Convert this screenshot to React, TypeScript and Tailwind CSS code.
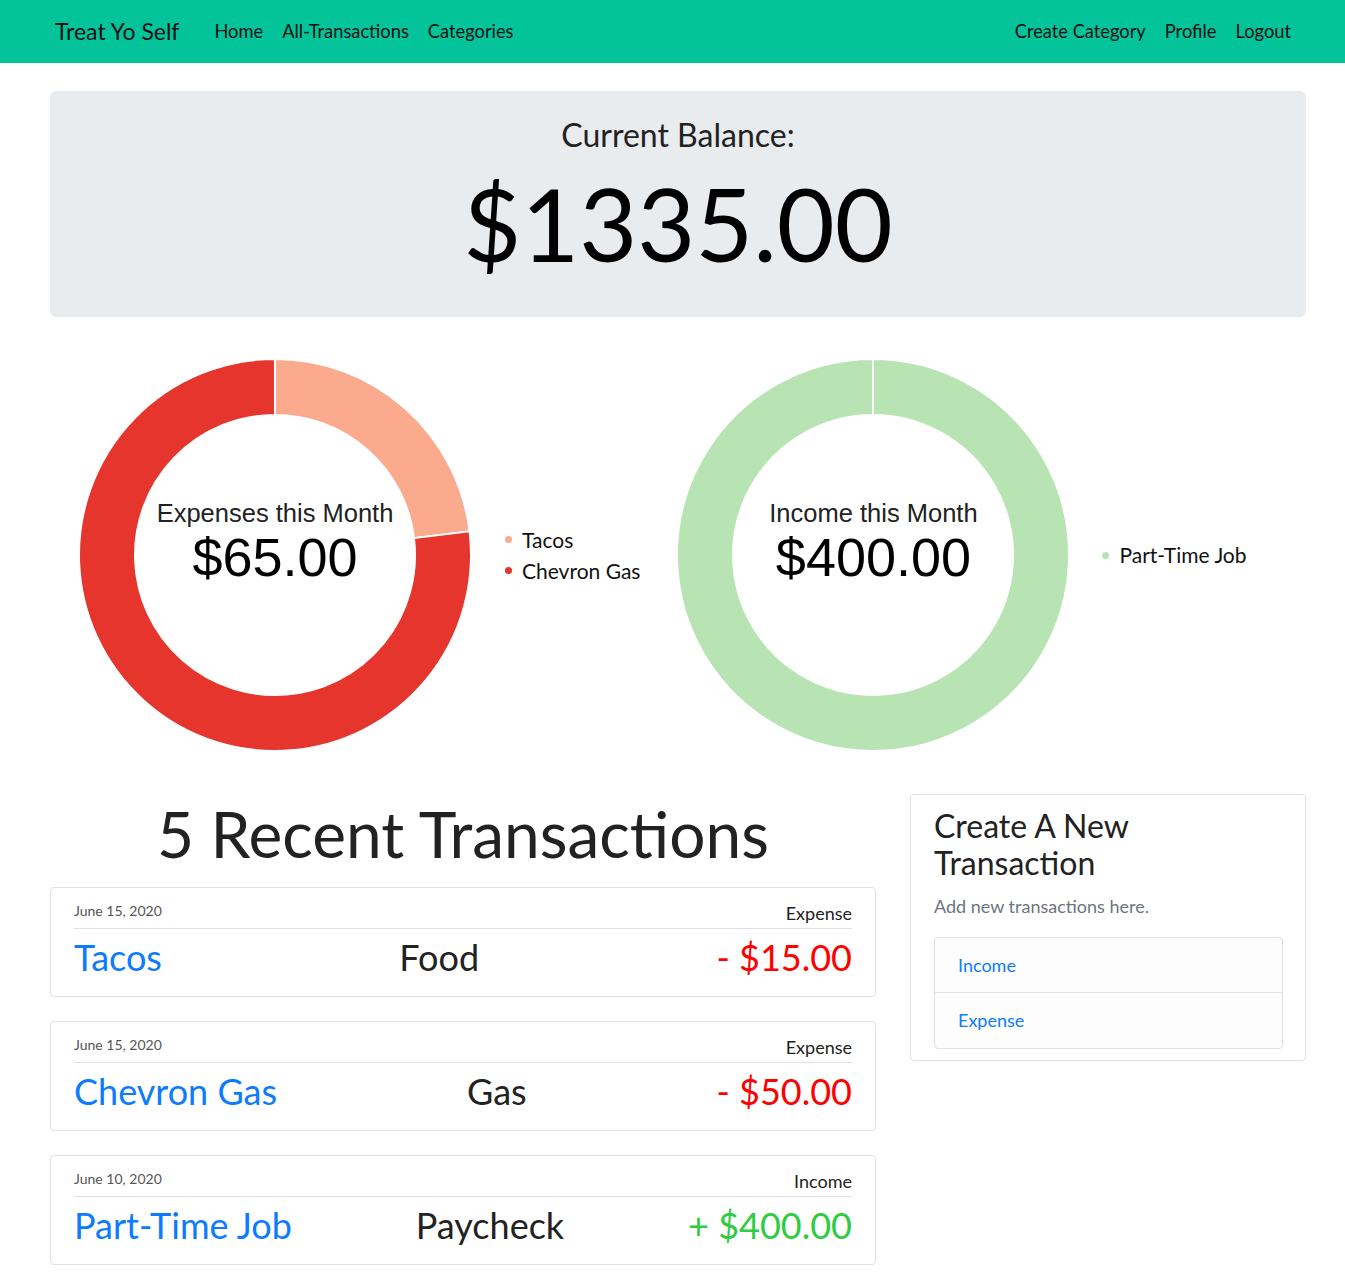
import React from 'react';

const lato = { fontFamily: 'Lato, "Noto Sans", sans-serif' };

interface Slice {
  label: string;
  value: number;
  color: string;
}

const R = 197;
const r = 140;

function arcPath(a0: number, a1: number) {
  const rad = (a: number) => ((a - 90) * Math.PI) / 180;
  const p = (rr: number, a: number) => `${R + rr * Math.cos(rad(a))} ${R + rr * Math.sin(rad(a))}`;
  const large = a1 - a0 > 180 ? 1 : 0;
  return `M ${p(R - 1, a0)} A ${R - 1} ${R - 1} 0 ${large} 1 ${p(R - 1, a1)} L ${p(r, a1)} A ${r} ${r} 0 ${large} 0 ${p(r, a0)} Z`;
}

const Donut: React.FC<{ slices: Slice[]; title: string; amount: string }> = ({ slices, title, amount }) => {
  const total = slices.reduce((s, x) => s + x.value, 0);
  let start = 0;
  return (
    <div className="relative h-[394px] w-[394px] shrink-0">
      <svg width="394" height="394" viewBox="0 0 394 394">
        {slices.map((s) => {
          const end = start + (s.value / total) * 360;
          const d = arcPath(start, Math.min(end, 359.99));
          start = end;
          return <path key={s.label} d={d} fill={s.color} stroke="#fff" strokeWidth="2" />;
        })}
      </svg>
      <div
        className="absolute inset-0 flex flex-col items-center justify-center pb-[25px] text-black"
        style={{ fontFamily: '"Liberation Sans", Arial, sans-serif' }}
      >
        <div className="text-[25.5px] leading-none text-[#222]">{title}</div>
        <div className="mt-[4px] text-[54px] leading-none">{amount}</div>
      </div>
    </div>
  );
};

const Legend: React.FC<{ slices: Slice[] }> = ({ slices }) => (
  <div className="flex flex-col gap-[7px]">
    {slices.map((s) => (
      <div key={s.label} className="flex items-center text-[21px] leading-[24px] text-[#111]">
        <span className="mr-[10px] inline-block h-[7px] w-[7px] rounded-full" style={{ backgroundColor: s.color }} />
        {s.label}
      </div>
    ))}
  </div>
);

const transactions = [
  { date: 'June 15, 2020', type: 'Expense', name: 'Tacos', category: 'Food', amount: '- $15.00', income: false },
  { date: 'June 15, 2020', type: 'Expense', name: 'Chevron Gas', category: 'Gas', amount: '- $50.00', income: false },
  { date: 'June 10, 2020', type: 'Income', name: 'Part-Time Job', category: 'Paycheck', amount: '+ $400.00', income: true },
];

const expenses: Slice[] = [
  { label: 'Tacos', value: 15, color: '#fbaa8d' },
  { label: 'Chevron Gas', value: 50, color: '#e5352c' },
];
const income: Slice[] = [{ label: 'Part-Time Job', value: 400, color: '#b8e3b3' }];

export default function App() {
  return (
    <div className="min-h-[1279px] bg-white text-[#222]" style={lato}>
      <nav className="flex h-[63px] items-center bg-[#03c39b] pl-[55px] pr-[54px] text-[#111]">
        <span className="mr-[35px] text-[23px]">Treat Yo Self</span>
        <div className="flex gap-[19px] text-[18.3px]">
          <span>Home</span>
          <span>All-Transactions</span>
          <span>Categories</span>
        </div>
        <div className="ml-auto flex gap-[19px] text-[18.3px]">
          <span>Create Category</span>
          <span>Profile</span>
          <span>Logout</span>
        </div>
      </nav>

      <div className="ml-[50px] w-[1256px]">
        <div className="mt-[28px] flex h-[226px] flex-col items-center rounded-[6px] bg-[#e9ecef] pt-[14px]">
          <h1 className="text-[32px] leading-[60px] text-[#222]">Current Balance:</h1>
          <div className="mt-[-2px] text-[100px] leading-[120px] text-black">$1335.00</div>
        </div>

        <div className="mt-[41px] flex items-center">
          <div className="ml-[28px] flex items-center">
            <Donut slices={expenses} title="Expenses this Month" amount="$65.00" />
            <div className="ml-[33px]">
              <Legend slices={expenses} />
            </div>
          </div>
          <div className="ml-[36px] flex items-center">
            <Donut slices={income} title="Income this Month" amount="$400.00" />
            <div className="ml-[32px]">
              <Legend slices={income} />
            </div>
          </div>
        </div>

        <div className="mt-[42px] flex items-start gap-[34px]">
          <div className="w-[826px]">
            <h2 className="mb-[14px] text-center text-[64px] leading-[79px] text-[#222]">5 Recent Transactions</h2>
            <div className="flex flex-col gap-[24px]">
              {transactions.map((t) => (
                <div key={t.name} className="h-[110px] rounded-[4px] border border-[#dfe2e5] px-[23px] pt-[13px]">
                  <div className="flex items-end justify-between border-b border-[#dee2e6] pb-[4px]">
                    <span className="mb-[3px] text-[14px] leading-[20px] text-[#555]">{t.date}</span>
                    <span className="text-[18px] leading-[22px] text-[#222]">{t.type}</span>
                  </div>
                  <div className="flex items-center justify-between pt-[4px] text-[36px] leading-[48px]">
                    <span className="text-[#0d7bff]">{t.name}</span>
                    <span className="text-[#222]">{t.category}</span>
                    <span className={t.income ? 'text-[#2ecc40]' : 'text-[#ff0000]'}>{t.amount}</span>
                  </div>
                </div>
              ))}
            </div>
          </div>

          <div className="w-[396px] rounded-[4px] border border-[#dfe2e5] pb-[11px] pl-[23px] pr-[22px] pt-[12px]">
            <h3 className="text-[32px] leading-[37px] text-[#222]">Create A New Transaction</h3>
            <p className="mt-[13px] text-[18px] leading-[24px] text-[#6c757d]">Add new transactions here.</p>
            <div className="mt-[19px] rounded-[4px] border border-[#dee2e6] bg-[#fdfdfd]">
              <div className="flex h-[55px] items-center border-b border-[#dee2e6] px-[23px] text-[18px] text-[#0d7bff]">Income</div>
              <div className="flex h-[55px] items-center px-[23px] text-[18px] text-[#0d7bff]">Expense</div>
            </div>
          </div>
        </div>
      </div>
    </div>
  );
}
